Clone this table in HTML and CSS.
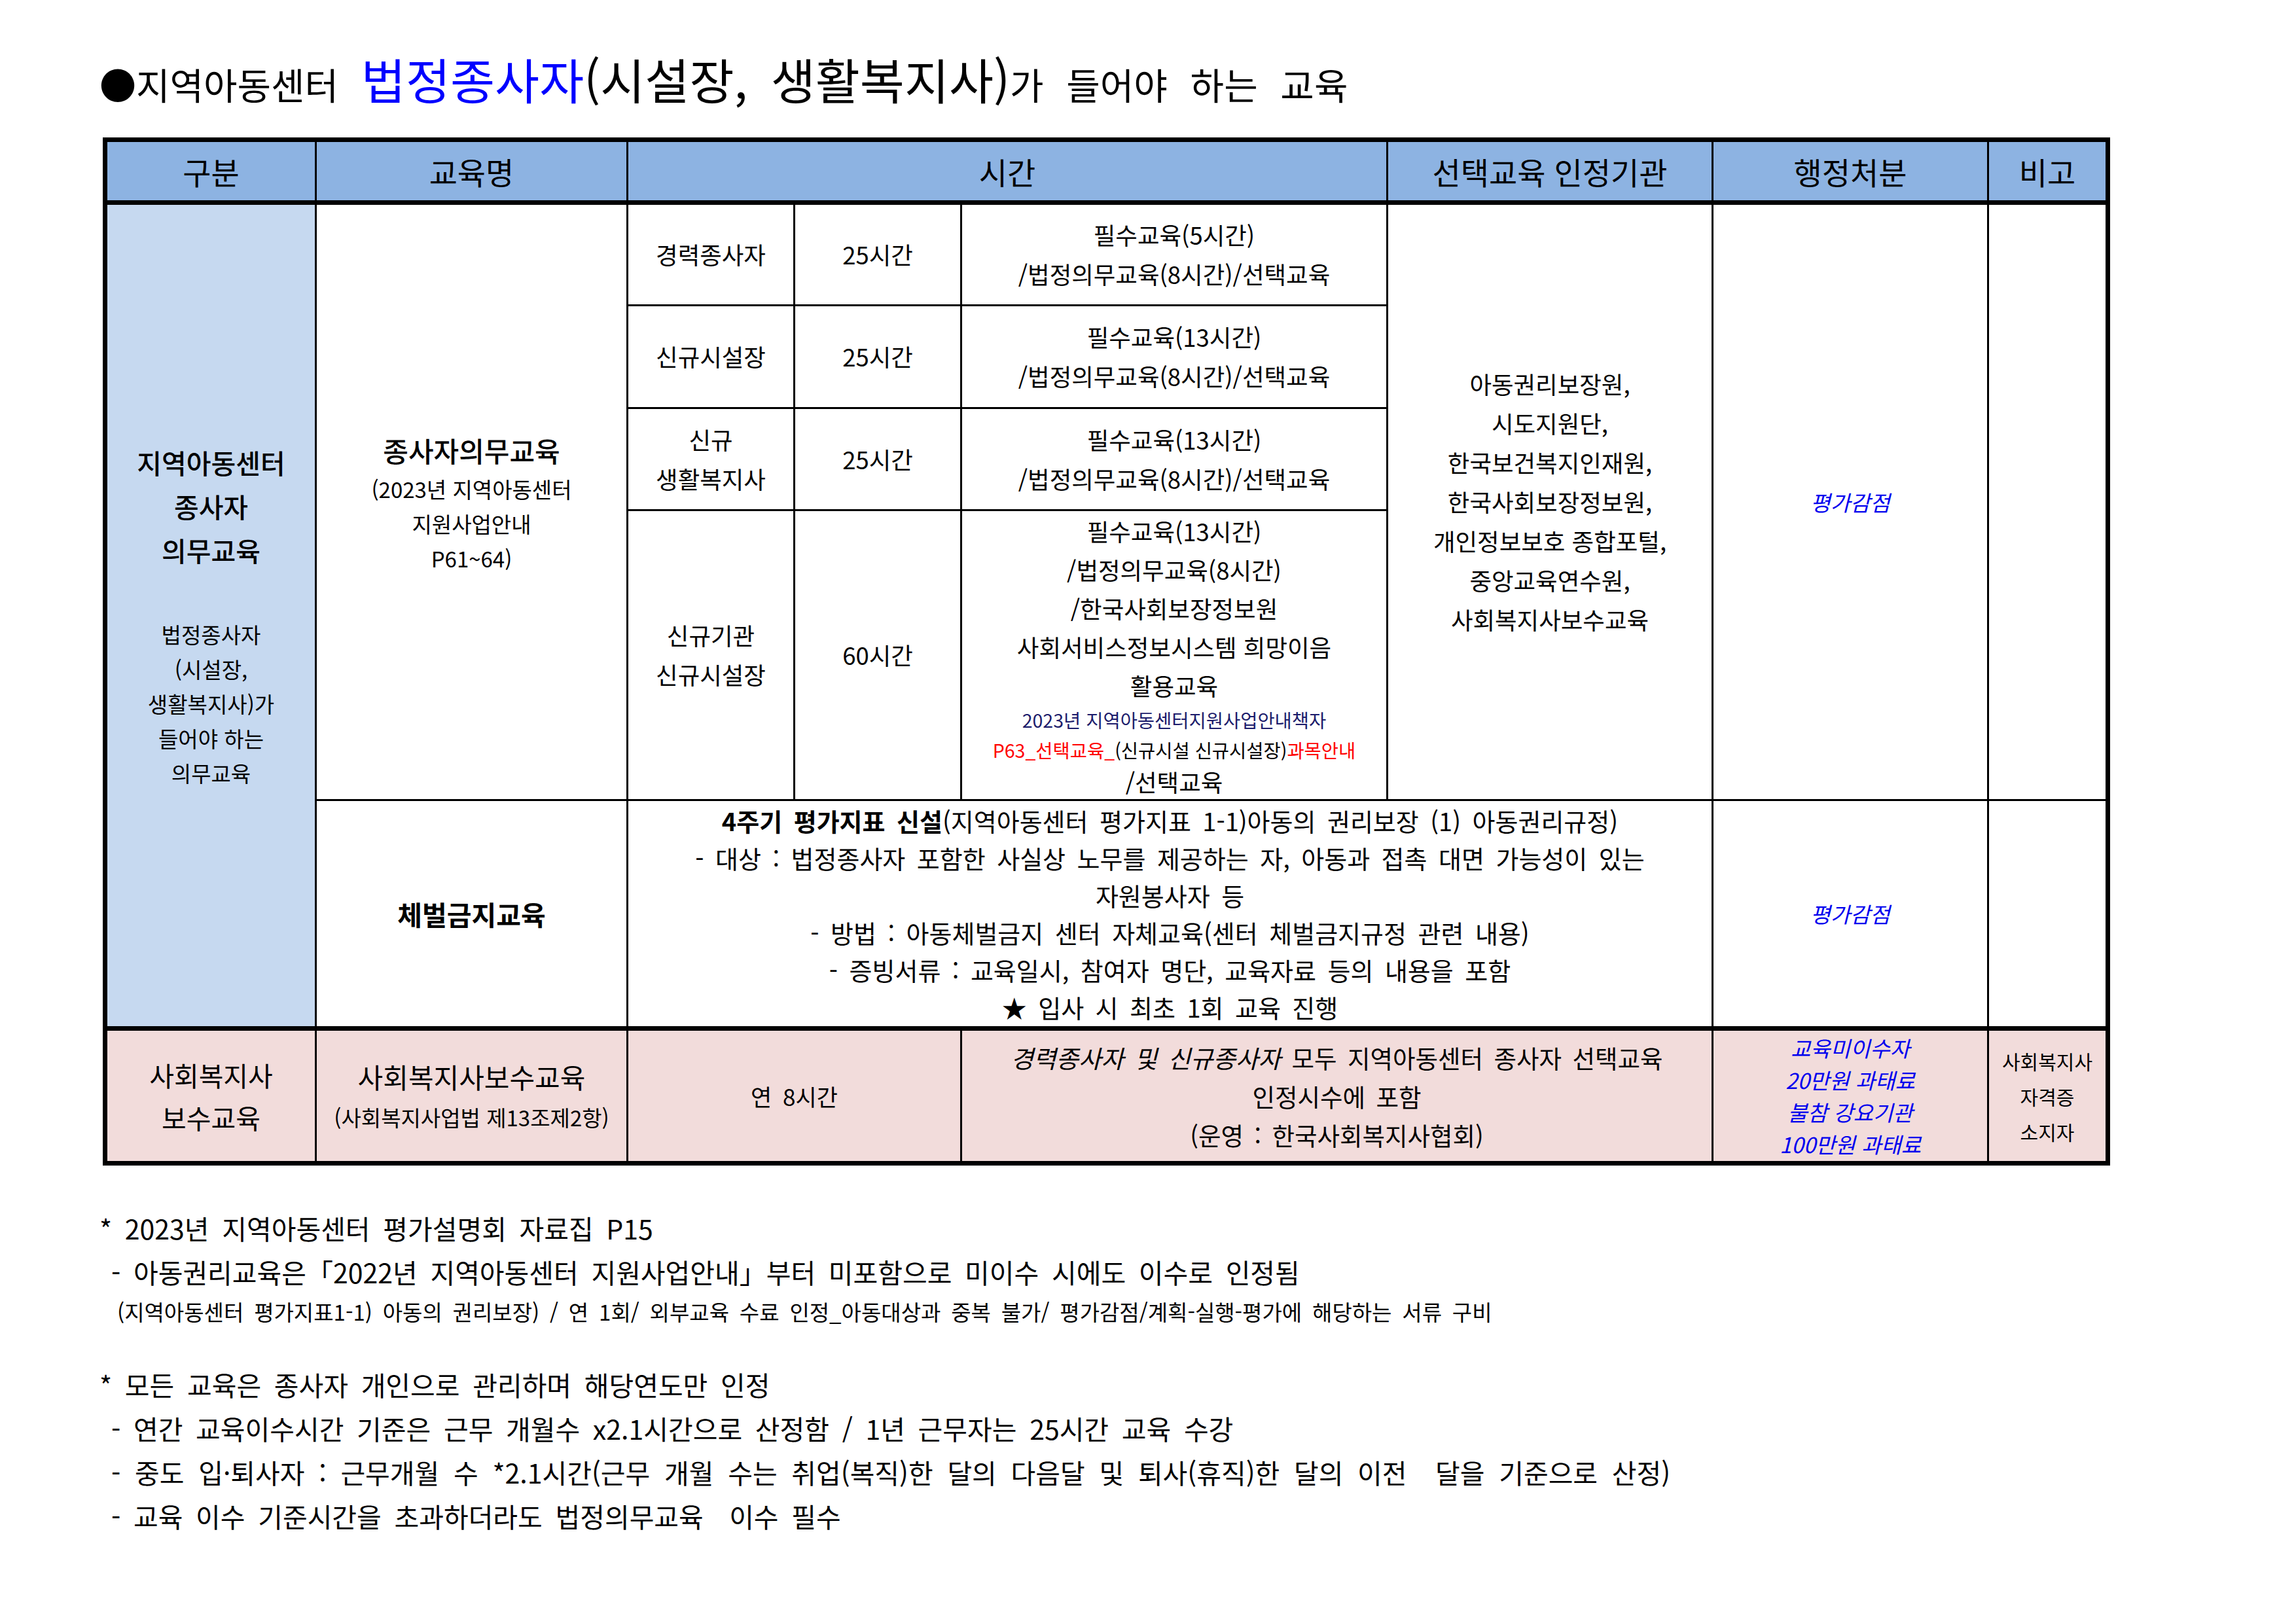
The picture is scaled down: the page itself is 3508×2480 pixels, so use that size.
FILE: index.html
```html
<!DOCTYPE html>
<html lang="ko">
<head>
<meta charset="utf-8">
<title>법정종사자 교육</title>
<link rel="stylesheet" href="styles.css">
</head>
<body>
<div class="page">
  <div class="title"><span class="sm">●지역아동센터 </span><span class="big blue">법정종사자</span><span class="big">(시설장, 생활복지사)</span><span class="sm">가 들어야 하는 교육</span></div>

  <table class="edu">
    <colgroup>
      <col class="c1"><col class="c2"><col class="c3"><col class="c4"><col class="c5"><col class="c6"><col class="c7"><col class="c8">
    </colgroup>
    <thead>
      <tr class="head">
        <th>구분</th><th>교육명</th><th colspan="3">시간</th><th>선택교육 인정기관</th><th>행정처분</th><th>비고</th>
      </tr>
    </thead>
    <tbody>
      <tr class="r1">
        <td rowspan="5" class="cat">
          <div class="cat-big">지역아동센터<br>종사자<br>의무교육</div>
          <div class="cat-sm">법정종사자<br>(시설장,<br>생활복지사)가<br>들어야 하는<br>의무교육</div>
        </td>
        <td rowspan="4" class="name">
          <div class="name-big">종사자의무교육</div>
          <div class="name-sm">(2023년 지역아동센터<br>지원사업안내<br>P61~64)</div>
        </td>
        <td class="sub">경력종사자</td>
        <td class="sub">25시간</td>
        <td class="sub">필수교육(5시간)<br>/법정의무교육(8시간)/선택교육</td>
        <td rowspan="4" class="sub">아동권리보장원,<br>시도지원단,<br>한국보건복지인재원,<br>한국사회보장정보원,<br>개인정보보호 종합포털,<br>중앙교육연수원,<br>사회복지사보수교육</td>
        <td rowspan="4" class="pen">평가감점</td>
        <td rowspan="4"></td>
      </tr>
      <tr class="r2">
        <td class="sub">신규시설장</td>
        <td class="sub">25시간</td>
        <td class="sub">필수교육(13시간)<br>/법정의무교육(8시간)/선택교육</td>
      </tr>
      <tr class="r3">
        <td class="sub">신규<br>생활복지사</td>
        <td class="sub">25시간</td>
        <td class="sub">필수교육(13시간)<br>/법정의무교육(8시간)/선택교육</td>
      </tr>
      <tr class="r4">
        <td class="sub">신규기관<br>신규시설장</td>
        <td class="sub">60시간</td>
        <td class="sub new">
          <div class="ln">필수교육(13시간)</div>
          <div class="ln">/법정의무교육(8시간)</div>
          <div class="ln">/한국사회보장정보원</div>
          <div class="ln">사회서비스정보시스템 희망이음</div>
          <div class="ln">활용교육</div>
          <div class="sl navy">2023년 지역아동센터지원사업안내책자</div>
          <div class="sl"><span class="red">P63_선택교육_</span>(신규시설 신규시설장)<span class="red">과목안내</span></div>
          <div class="ll">/선택교육</div>
        </td>
      </tr>
      <tr class="r5">
        <td class="name"><div class="name-big bold">체벌금지교육</div></td>
        <td colspan="4" class="punish"><b>4주기 평가지표 신설</b>(지역아동센터 평가지표 1-1)아동의 권리보장 (1) 아동권리규정)<br>- 대상 : 법정종사자 포함한 사실상 노무를 제공하는 자, 아동과 접촉 대면 가능성이 있는<br>자원봉사자 등<br>- 방법 : 아동체벌금지 센터 자체교육(센터 체벌금지규정 관련 내용)<br>- 증빙서류 : 교육일시, 참여자 명단, 교육자료 등의 내용을 포함<br>★ 입사 시 최초 1회 교육 진행</td>
        <td class="pen">평가감점</td>
        <td></td>
      </tr>
      <tr class="r6 pink">
        <td class="cat-p">사회복지사<br>보수교육</td>
        <td class="name-p">
          <div class="name-big">사회복지사보수교육</div>
          <div class="name-psm">(사회복지사업법 제13조제2항)</div>
        </td>
        <td colspan="2" class="hours">연 8시간</td>
        <td colspan="2" class="incl"><i>경력종사자 및 신규종사자</i> 모두 지역아동센터 종사자 선택교육<br>인정시수에 포함<br>(운영 : 한국사회복지사협회)</td>
        <td class="pen pen-p">교육미이수자<br>20만원 과태료<br>불참 강요기관<br>100만원 과태료</td>
        <td class="note-p">사회복지사<br>자격증<br>소지자</td>
      </tr>
    </tbody>
  </table>

  <div class="notes">
    <p class="n">* 2023년 지역아동센터 평가설명회 자료집 P15</p>
    <p class="n d">- 아동권리교육은「2022년 지역아동센터 지원사업안내」부터 미포함으로 미이수 시에도 이수로 인정됨</p>
    <p class="n s">(지역아동센터 평가지표1-1) 아동의 권리보장) / 연 1회/ 외부교육 수료 인정_아동대상과 중복 불가/ 평가감점/계획-실행-평가에 해당하는 서류 구비</p>
    <p class="n g">* 모든 교육은 종사자 개인으로 관리하며 해당연도만 인정</p>
    <p class="n d">- 연간 교육이수시간 기준은 근무 개월수 x2.1시간으로 산정함 / 1년 근무자는 25시간 교육 수강</p>
    <p class="n d wide">- 중도 입·퇴사자 : 근무개월 수 *2.1시간(근무 개월 수는 취업(복직)한 달의 다음달 및 퇴사(휴직)한 달의 이전  달을 기준으로 산정)</p>
    <p class="n d">- 교육 이수 기준시간을 초과하더라도 법정의무교육  이수 필수</p>
  </div>
</div>
</body>
</html>
```
FILE: styles.css
```css
* { box-sizing: border-box; }
html, body { margin: 0; padding: 0; background: #ffffff; }
body {
  font-family: "Noto Sans CJK KR", "Noto Sans", sans-serif;
  color: #000000;
}
.page {
  width: 3508px;
  height: 2480px;
  padding: 66px 0 0 152px;
}

/* title */
.title {
  height: 107px;
  line-height: 107px;
  white-space: nowrap;
  font-size: 56px;
  word-spacing: 0.34em;
}
.title .big { font-size: 74px; word-spacing: 0.2em; }
.title .blue { color: #0000ff; }

/* table */
.edu {
  margin: 37px 0 0 5px;
  width: 3060px;
  table-layout: fixed;
  border-collapse: collapse;
  border: 7px solid #000;
}
.c1 { width: 322px; }
.c2 { width: 476px; }
.c3 { width: 255px; }
.c4 { width: 255px; }
.c5 { width: 651px; }
.c6 { width: 497px; }
.c7 { width: 421px; }
.c8 { width: 183px; }

.edu th, .edu td {
  border: 3px solid #000;
  padding: 0;
  text-align: center;
  vertical-align: middle;
  white-space: nowrap;
  font-weight: 400;
  overflow: visible;
}
.edu thead th {
  background: #8db3e2;
  font-size: 47px;
  border-bottom: 7px solid #000;
}
.head { height: 96px; }
.r1 { height: 157px; }
.r2 { height: 157px; }
.r3 { height: 156px; }
.r4 { height: 443px; }
.r5 { height: 349px; }
.r6 { height: 206px; }

.cat { background: #c6d9f0; }
.cat-big { font-size: 41px; line-height: 67px; font-weight: 500; }
.cat-sm { font-size: 33px; line-height: 53px; margin-top: 69px; }

.name-big { font-size: 42px; line-height: 67px; font-weight: 500; }
.name-big.bold { font-weight: 700; font-size: 41px; }
.name-sm { font-size: 33px; line-height: 53px; }

.sub { font-size: 36.5px; line-height: 60px; }
.new .ln { line-height: 59px; }
.new .sl { font-size: 28.5px; line-height: 46px; }
.new .ll { line-height: 52px; }
.navy { color: #1c1c6b; }
.red { color: #ff0000; }

.pen {
  color: #0000ee;
  font-style: italic;
  font-size: 33px;
  line-height: 54px;
}

.punish {
  font-size: 38px;
  line-height: 57px;
  word-spacing: 0.18em;
}
.punish b { font-weight: 700; }

.pink td { background: #f2dcdb; border-top: 7px solid #000; }
.cat-p { font-size: 41px; line-height: 65px; }
.name-p .name-big { line-height: 65px; font-weight: 400; }
.name-psm { font-size: 33px; line-height: 61px; }
.hours { font-size: 35px; word-spacing: 0.2em; }
.incl { font-size: 37.5px; line-height: 59px; word-spacing: 0.16em; }
.pen-p { line-height: 49px; }
.note-p { font-size: 30px; line-height: 54px; }

/* notes */
.notes { margin-top: 62px; }
.n {
  margin: 0;
  font-size: 41px;
  line-height: 67px;
  white-space: pre;
  word-spacing: 0.2em;
}
.n.d { padding-left: 18px; }
.n.wide { word-spacing: 0.25em; }
.n.s { font-size: 33px; line-height: 54px; padding-left: 27px; word-spacing: 0.2em; }
.n.g { margin-top: 51px; }
```
